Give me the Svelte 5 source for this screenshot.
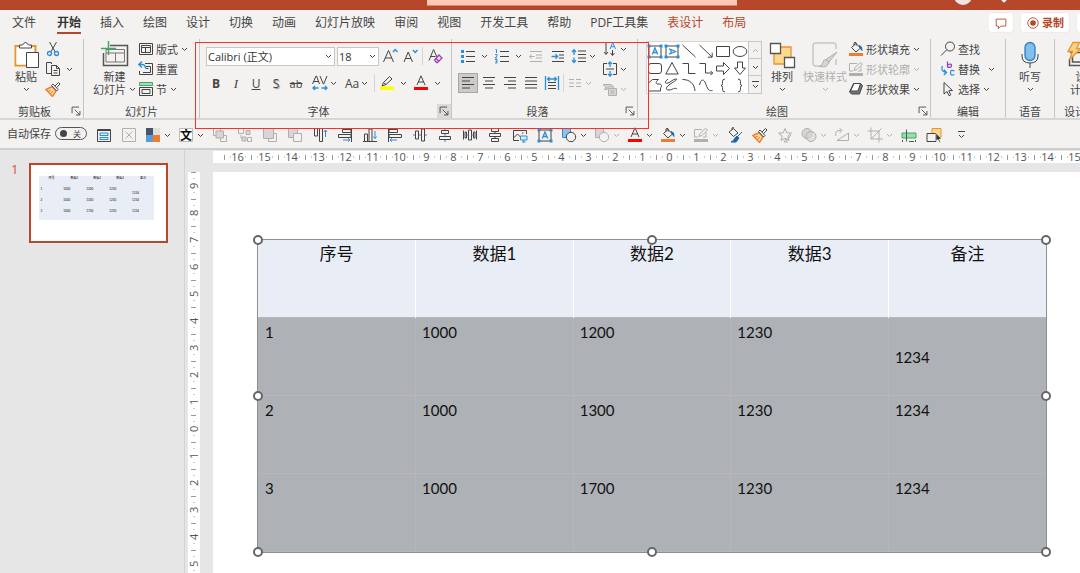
<script lang="ts">
    const tabs = ['文件', '开始', '插入', '绘图', '设计', '切换', '动画', '幻灯片放映', '审阅', '视图', '开发工具', '帮助', 'PDF工具集', '表设计', '布局']
    const activeTab = '开始'
    const contextTabs = ['表设计', '布局']

    const columns = ['序号', '数据1', '数据2', '数据3', '备注']
    const rows = [
        ['1', '1000', '1200', '1230', '1234'],
        ['2', '1000', '1300', '1230', '1234'],
        ['3', '1000', '1700', '1230', '1234']
    ]

    const horizontalMarks = Array.from({ length: 32 }, (_, i) => Math.abs(i - 16))
    const verticalMarks = Array.from({ length: 15 }, (_, i) => Math.abs(i - 9))
    const handles = ['nw', 'n', 'ne', 'w', 'e', 'sw', 's', 'se']

    const shapes = [
        'textBox', 'textBoxVertical', 'line', 'arrowLine', 'rect', 'oval',
        'roundRect', 'triangle', 'elbow', 'elbowArrow', 'arrowRight', 'arrowDown',
        'freeform', 'scribble', 'arc', 'curve', 'braceLeft', 'braceRight'
    ]

    type Tool = { icon: string, label: string, menu?: boolean, off?: boolean }

    const quickTools: Tool[] = [
        { icon: 'form', label: '窗体' },
        { icon: 'boxX', label: '删除', off: true },
        { icon: 'palette', label: '主题颜色', menu: true },
        { icon: 'glyph', label: '字体', menu: true },
        { icon: 'group', label: '组合', off: true },
        { icon: 'ungroup', label: '取消组合', off: true },
        { icon: 'front', label: '置于顶层', off: true },
        { icon: 'back', label: '置于底层', off: true },
        { icon: 'alignTop', label: '顶端对齐' },
        { icon: 'alignRightEdge', label: '右对齐' },
        { icon: 'alignBottom', label: '底端对齐' },
        { icon: 'alignLeftEdge', label: '左对齐' },
        { icon: 'alignMiddle', label: '垂直居中' },
        { icon: 'alignCenter', label: '水平居中' },
        { icon: 'spreadH', label: '横向分布' },
        { icon: 'spreadV', label: '纵向分布' },
        { icon: 'picture', label: '图片' },
        { icon: 'textBox', label: '文本框' },
        { icon: 'shapes', label: '形状', menu: true },
        { icon: 'shapesOff', label: '编辑形状', menu: true, off: true },
        { icon: 'fontColor', label: '字体颜色', menu: true },
        { icon: 'bucket', label: '形状填充', menu: true },
        { icon: 'outline', label: '形状轮廓', menu: true, off: true },
        { icon: 'eyedropper', label: '取色器' },
        { icon: 'brush', label: '格式刷' },
        { icon: 'star', label: '动画刷', off: true },
        { icon: 'merge', label: '合并形状', menu: true, off: true },
        { icon: 'rotate', label: '旋转', menu: true, off: true },
        { icon: 'crop', label: '裁剪', menu: true, off: true },
        { icon: 'guide', label: '参考线' },
        { icon: 'selection', label: '选择窗格' }
    ]

    const blue = '#2b8fd6'
    const orange = '#ed7d31'
    const pale = '#d6d6d6'

    // Small icons share a 16 x 16 box, the large ones a 28 x 28 box
    const icons: Record<string, string> = {
        scissors: `<path d="M4.500 1 10.200 11M11.500 1 5.800 11"/><g stroke="${blue}" stroke-width="1.300"><circle cx="4.500" cy="12.500" r="2"/><circle cx="11.500" cy="12.500" r="2"/></g>`,
        copy: `<path d="M6 12.500H1.500v-11h5V3M6.500 4.500h5l3 3v7h-8zM11.500 4.500v3h3M8.500 9.500h4M8.500 12h4" />`,
        brush: `<path d="M1 8.500 7 5.500 11 10 7.500 15.500z" fill="#ffd9a0" stroke="${orange}" stroke-width="1.400"/><path d="M3 10.500 6 9M5 13 8 10" stroke="${orange}"/><path d="M6.500 4.500 8 3l5 5.500-1.500 1.500zM10 5 13.500 1.500l1.500 1.500-3.500 3.700" fill="#fff"/>`,
        layout: `<path d="M1.500 2.500h13v11h-13z"/><path d="M3.500 4.500h9v2h-9zM3.500 6.500v5h9v-5M7.500 6.500v5"/>`,
        reset: `<path d="M7 2.500h7.500v11h-13V10M5 11.500h7.500v-6H8M8 7.500h2.500"/><path d="M4 .5.800 3.500 4 6.500M1 3.500h3.500q3 .5 3 4" stroke="${blue}" stroke-width="1.300"/>`,
        section: `<path d="M1.500 4.500v-3h13v3z" stroke="#43a566" fill="#a7dcb6"/><path d="M1.500 6.500h13v8h-13zM4 8.500h8v4H4z"/>`,
        grow: `<path d="M1.500 14 6.500 2.500 11.500 14M3.200 10h6.600"/><path d="M11 4 13.200 1.500 15.500 4" stroke="${blue}" stroke-width="1.400"/>`,
        shrink: `<path d="M2 14 6.200 4 10.500 14M3.500 10.500h5.400"/><path d="M11 2 13.200 4.500 15.500 2" stroke="${blue}" stroke-width="1.400"/>`,
        clear: `<path d="M2 12.500 6.500 1.500 10 9M3.500 8.500h5"/><path d="m7.500 12 4.500-5 3 3-4.500 4.500h-1zM9 10.500l3 2.700" stroke="#9b45b2" fill="#f3ddf7" stroke-width="1.300"/>`,
        spacing: `<path d="M.5 9 4 1h.5L7.500 9M1.800 6.500h4.400M8 1l3.300 8h.4L15 1"/><path d="M1 13h5.500M3 11 1 13l2 2M9.500 13H15M13 11l2 2-2 2" stroke="${blue}" stroke-width="1.300"/>`,
        highlight: `<path d="m4.500 7.500 6-6 2.500 2.500-6 5.500zM4.500 7.500 3 11l4-1.500"/><path d="M1 11.500h14v3.500H1z" fill="#ffff00" stroke="none"/>`,
        fontColor: `<path d="M4 10 8 .800 12 10M5.300 7h5.400"/><path d="M1 12h14v3H1z" fill="#f00" stroke="none"/>`,
        bullets: `<path d="M6 3.500h9M6 8.500h9M6 13.500h9"/><path d="M1 2h3v3H1zM1 7h3v3H1zM1 12h3v3H1z" fill="${blue}" stroke="none"/>`,
        numbers: `<path d="M6 3.500h9M6 8.500h9M6 13.500h9"/><path d="M1.500 1.500h1v3.500M1 6.500h2v1.500l-2 2h2.300M1 11.500h2v3.500H1M1.500 13.200H3" stroke="${blue}"/>`,
        outdent: `<path d="M2 3.500h12M8 7h6M8 10h6M2 13.500h12M1.500 8.500h5M3.500 6.500l-2 2 2 2"/>`,
        indent: `<path d="M2 3.500h12M9 7h5M9 10h5M2 13.500h12"/><path d="M1.500 8.500h6M5.500 6.200 7.700 8.500 5.500 10.800" stroke="${blue}" stroke-width="1.300"/>`,
        lineSpacing: `<path d="M7 3h8M7 6.500h8M7 10h8M7 13.500h8"/><path d="M3 2v5M3 9.500v5M1 4l2-2.200L5 4M1 12.300l2 2.200 2-2.200" stroke="${blue}" stroke-width="1.300"/>`,
        left: `<path d="M2 2.500h12M2 6h8M2 9.500h12M2 13h8"/>`,
        center: `<path d="M2 2.500h12M4 6h8M2 9.500h12M4 13h8"/>`,
        right: `<path d="M2 2.500h12M6 6h8M2 9.500h12M6 13h8"/>`,
        justify: `<path d="M2 2.500h12M2 6h12M2 9.500h12M2 13h12"/>`,
        distribute: `<path d="M4 7.500h8M4 10.500h8M4 13.500h8"/><path d="M1.500 1v14M14.500 1v14M3.500 4h9M5.500 2l-2 2 2 2M10.500 2l2 2-2 2" stroke="${blue}" stroke-width="1.300"/>`,
        columns: `<path d="M2 4.500h5M2 8h5M2 11.500h5M9 4.500h5M9 8h5M9 11.500h5"/>`,
        textDirection: `<path d="M4 1v12M2 11l2 2.500L6 11M10.500 9v5M8.500 12l2 2.500 2-2.500"/><path d="M8 8 10.700 1.500 13.500 8M9 5.700h3.500" stroke="${blue}"/>`,
        alignText: `<path d="M5 2.500H1.500v11H5M11 2.500h3.500v11H11M4 8h8"/><path d="M8 1v5M8 10v5M6 3l2-2 2 2M6 13l2 2 2-2" stroke="${blue}" stroke-width="1.300"/>`,
        smartArt: `<path d="M1 3.500h8l3 2.500h-6L5 8.500H2.500L4 6zM6.500 7.500h8v7h-8zM8.500 10h4M8.500 12h4" fill="${pale}"/>`,
        textBox: `<path d="M2 3h12v11H2z"/><path d="M5.300 11.500 8 5l2.700 6.500M6.200 9.500h3.600" stroke="${blue}" stroke-width="1.300"/><path d="M.5 1.500h3v3h-3zM12.500 1.500h3v3h-3zM.5 12.500h3v3h-3zM12.500 12.500h3v3h-3z" fill="${blue}" stroke="none"/>`,
        textBoxVertical: `<path d="M2 3h12v11H2z"/><path d="M5 5.800 11.500 8.500 5 11.200M7 6.700v3.600" stroke="${blue}" stroke-width="1.300"/><path d="M.5 1.500h3v3h-3zM12.500 1.500h3v3h-3zM.5 12.500h3v3h-3zM12.500 12.500h3v3h-3z" fill="${blue}" stroke="none"/>`,
        line: `<path d="m1.500 2 13 12"/>`,
        arrowLine: `<path d="m1.500 2 12.500 12M14.200 9.800v4.400H9.800"/>`,
        rect: `<path d="M1.500 3.500h13v10h-13z"/>`,
        oval: `<ellipse cx="8" cy="8.500" rx="6.800" ry="5"/>`,
        roundRect: `<rect x="1.500" y="3.500" width="13" height="10" rx="2.500"/>`,
        triangle: `<path d="M8 2.500 14.200 14H1.800z"/>`,
        elbow: `<path d="M1.500 3.500h6v10h7"/>`,
        elbowArrow: `<path d="M1.500 3.500h6v9.500h7M12.500 10.800l2.200 2.200-2.200 2.200"/>`,
        arrowRight: `<path d="M1.500 6h7V2.500l6 6-6 6V11h-7z"/>`,
        arrowDown: `<path d="M5.500 2v6H2.500l5.500 6.500L13.500 8h-3V2z"/>`,
        freeform: `<path d="M1.500 14V6l4-3.500h6C8 5 8.500 7.500 12 7c3 0 3 2.500 1.500 4v3z"/>`,
        scribble: `<path d="M4 2c-4 3-3 5 0 4s5-4 8-4-3 3-7 6-3 5 0 5 6-3 8-1"/>`,
        arc: `<path d="M1.500 2.500c7 0 12 4 12.500 11.500"/>`,
        curve: `<path d="M1.500 8C3 1.500 6 1.500 8 7.500s3.500 6.500 6.500 6"/>`,
        braceLeft: `<path d="M10 2q-2.500 0-2.500 2.500v2Q7.500 8.500 6 8.500q1.500 0 1.500 2v2Q7.500 15 10 15"/>`,
        braceRight: `<path d="M6 2q2.500 0 2.500 2.500v2q0 2 1.500 2-1.500 0-1.500 2v2Q8.500 15 6 15"/>`,
        bucket: `<path d="m3.500 6.500 4.500-4 4.500 4.500-4.500 4zM6 4.500V2q1-1.500 2.300 0v2.500"/><path d="M11 4.500q3.500.5 3 5l-1.500-2z" fill="#1769ad" stroke="#1769ad"/><path d="M1 12h14v3H1z" fill="${orange}" stroke="none"/>`,
        outline: `<path d="M9 2.500H1.500V10H5M13 5.500V10h-3M6 9.500l1-3 5.500-5 2 1.500-5.500 5.500z"/><path d="M1 12h14v3H1z" fill="currentColor" stroke="none"/>`,
        effects: `<path d="M5.500 2.500h7l2 2-3 8.500h-8l-2-2z" fill="#777"/><path d="M6 2.500h6.500L10 10H2.500z" fill="#fff"/>`,
        search: `<circle cx="10" cy="5.500" r="4.500"/><path d="M6.500 9 1 14.500"/>`,
        replace: `<path d="M7.500.5v6M7.500 4q4-2 4 .5t-4 1.500" stroke="#9b45b2" stroke-width="1.300"/><path d="M14.500 10q-4-2-4 1.700t4 1.800M2.500 5q-2.500 5 3.500 6.500M4 8.800 6.500 11.500 3.800 14" stroke="${blue}" stroke-width="1.300"/>`,
        pointer: `<path d="M4 1.500v11.500l3-2.500 2 4.200 1.800-.8-2-4.200 3.700-.2z"/>`,
        form: `<path d="M1.500 2.500h13v12h-13z"/><path d="M1 3.500h14" /><path d="M4 6h8v2.500H4zM4 10.500h8v2H4z" stroke="${blue}" fill="#d8ecfa"/>`,
        boxX: `<path d="M1.500 1.500h13v13h-13zM4.500 4.500l7 7M11.500 4.500l-7 7"/>`,
        palette: `<g stroke="none"><path d="M1 1h7v7H1z" fill="#44546a"/><path d="M8 1h7v7H8z" fill="#e0e0e0"/><path d="M1 8h7v7H1z" fill="#5b9bd5"/><path d="M8 8h7v7H8z" fill="${orange}"/></g>`,
        glyph: `<path d="M1.500 1.500h13v13h-13z" fill="#fff" stroke="#bbb"/><text x="8" y="13" font-size="12" font-weight="700" text-anchor="middle" fill="#111" stroke="none">文</text>`,
        group: `<path d="M1.500 1.500h7v7h-7zM10.500 8.500h4v6h-6v-4"/><path d="M4 4h7.500v7H4z" fill="${pale}"/>`,
        ungroup: `<path d="M1.500 1.500h5v5h-5zM10.500 10.500h4v4h-4zM4 8v3h3"/><path d="M9 3.500h4v4H9zM5 10h4v4H5z" fill="${pale}"/>`,
        front: `<path d="M12 6.500h2.500v8h-8V12"/><path d="M1.500 1.500h10v10h-10z" fill="${pale}"/>`,
        back: `<path d="M1.500 1.500h9v9h-9z" fill="${pale}"/><path d="M6.500 6.500h8v8h-8z" fill="#f3f2f1"/>`,
        alignTop: `<path d="M1 1.500h10M2.500 2v7h3V2M7.500 2v12.500h3V2" /><path d="M13.500 10V3M11.800 5l1.700-2 1.700 2" stroke="${blue}"/>`,
        alignRightEdge: `<path d="M14.500 1v14M5.500 2.500H14v3H5.500zM1.500 7.500H14v3H1.500z"/><path d="M6 13h7M11 11.300l2 1.700-2 1.700" stroke="${blue}"/>`,
        alignBottom: `<path d="M1 14.500h14M2.500 14V7h3v7M7 14V2h3v12"/><path d="M13 4v7.500M11.300 9.500l1.700 2 1.700-2" stroke="${blue}"/>`,
        alignLeftEdge: `<path d="M1.500 1v14M2 2.500h8.500v3H2zM2 7.500h12.500v3H2z"/><path d="M10 13H3M5 11.300 3 13l2 1.700" stroke="${blue}"/>`,
        alignMiddle: `<path d="M1 8h14" stroke="${blue}"/><path d="M3.500 4h3v8h-3zM9.500 2h3v12h-3z" fill="#f3f2f1"/>`,
        alignCenter: `<path d="M8 1v14" stroke="${blue}"/><path d="M4.500 3.500h7v3h-7zM2.500 9.500h11v3h-11z" fill="#f3f2f1"/>`,
        spreadH: `<path d="M1.500 3.500v9M14.500 3.500v9M6.500 3h3v10h-3zM3 5h1.500v6H3zM11.500 5H13v6h-1.500z"/><path d="M4.500 8h2M9.500 8h2" stroke="${blue}"/>`,
        spreadV: `<path d="M4.500 1.500h7v3h-7zM2.500 6.500h11v3h-11zM4.500 11.500h7v3h-7zM8 4.500v2M8 9.500v2"/>`,
        picture: `<path d="M14.500 7V3.500h-13v10H7M1.500 11l4-4 3 3M10 6h1.500"/><path d="M8.500 9h6.500v4H8.500zM11.700 13v2M10 15h3.500" stroke="${blue}" fill="#d8ecfa"/>`,
        shapes: `<path d="M1.500 1.500h8v9h-8z" fill="#8cc3ee" stroke="${blue}"/><circle cx="10" cy="10" r="4.700" fill="#f3f2f1"/>`,
        shapesOff: `<path d="M1.500 1.500h8v9h-8z" fill="${pale}"/><circle cx="10" cy="10" r="4.700" fill="#f3f2f1"/>`,
        eyedropper: `<path d="m2 5 4.500-3.500L11 6 6.500 9.500zM5 3V1q1-1 2 0"/><path d="m15 5-6 6M10 9l2 2-3 4H4q3-1 3.500-3.500z" fill="#1769ad" stroke="#1769ad"/>`,
        star: `<path d="m8 1.500 1.800 4.300 4.700.3-3.600 3 1 4.400L8 11.200 4 13.500l1.200-4.400-3.700-3 4.700-.3zM14 8l-5 6M9 12l-2 3h4"/>`,
        merge: `<circle cx="6" cy="6.500" r="5" fill="${pale}"/><circle cx="10" cy="9.500" r="5" fill="${pale}" fill-opacity=".6"/>`,
        rotate: `<path d="M14.500 6v7.500H3zM2 9Q0 3 7 3.500M5.500 1 8 3.500 5.500 6"/>`,
        crop: `<path d="M4 .5V12h12M.5 4H12v11.500M4 12 14.500 1.500"/>`,
        guide: `<path d="M1 6h14v5H1z" fill="#9bdcab" stroke="#43a566"/><path d="M5.500 2.500v12M1.500 13v2M14.500 13v2M8 14.500h5" stroke="#555"/>`,
        selection: `<path d="M6 1.500h9v9H6z" fill="#ffd78a" stroke="#e7952d"/><path d="M1 6.500h9v8H1z" fill="#f3f2f1"/><path d="M10 6v8l2-1.500 1.500 3 1-.5-1.300-3h2.300z" fill="#333" stroke="#fff" stroke-width=".5"/>`,
        paste: `<path d="M9 5H3.500v19.500H14M19 5h4.500v6" stroke="#e7952d" stroke-width="2"/><path d="M4.500 6.500h17v17h-17z" fill="#fff" stroke="none"/><path d="M7.500 7V4h3q3-5 6 0h3v3z" fill="#fff"/><path d="M14.500 11.500h12v15h-12z" fill="#fff"/>`,
        newSlide: `<path d="M9 4.500h17.500v20h-24V12" fill="none" stroke="#555" stroke-width="1.500"/><path d="M5 12h18.500v9H5zM5 12V8.500h18.500V12M14.500 12v9" stroke="#777"/><path d="M7.500 0v14M0 7.500h15" stroke="#43a566" stroke-width="1.500"/>`,
        arrange: `<path d="M6 6h17v17H6z" fill="#fbd98d" stroke="#e7952d" stroke-width="1.300"/><path d="M2.500 2.500h10v10h-10zM16.500 16.500h10v10h-10z" fill="#fff" stroke="#555" stroke-width="1.300"/>`,
        quickStyle: `<path d="M25 8V4q0-2-2-2H4Q2 2 2 4v19q0 2 2 2h6M25 18v6" fill="none"/><path d="M26 11 18 21l-3-2.500zM15 18.500q-3 0-3.500 4-1 3-3 3 8 2 9.500-4.500z" fill="${pale}"/>`,
        mic: `<rect x="9" y="1.500" width="10" height="18" rx="5" fill="#83beec" stroke="#2b7fc4" stroke-width="1.300"/><path d="M6 13v2q0 7 8 7t8-7v-2M14 22v5"/>`,
        designer: `<path d="M3 11.500h25M2.500 18v6.500H28M5.500 12v9H28" fill="none" stroke="#555" stroke-width="1.500"/><path d="M6 1.500h6.500l-3 6h4.500L2.500 18.500l3-8H1z" fill="#fdd084" stroke="#e7952d" stroke-width="1.300"/>`,
        comment: `<path d="M2.500 3.500h11v8H8l-3 3v-3H2.500z" stroke="#b7472a"/>`,
        record: `<circle cx="8" cy="8" r="6" stroke="#b7472a"/><circle cx="8" cy="8" r="3.200" fill="#b7472a" stroke="none"/>`,
        launcher: `<path d="M3.500 10.500v-7h8M6.500 6.500l6 6M12.500 8v4.500H8"/>`
    }
</script>

{#snippet icon(name: string)}
    <svg class="icon" viewBox="0 0 16 16" aria-hidden="true">{@html icons[name]}</svg>
{/snippet}

{#snippet bigIcon(name: string)}
    <svg class="big-icon" viewBox="0 0 28 28" aria-hidden="true">{@html icons[name]}</svg>
{/snippet}

{#snippet chevron()}
    <svg class="chevron" viewBox="0 0 7 5" aria-hidden="true"><path d="M1 1l2.500 2.500L6 1" /></svg>
{/snippet}

{#snippet tool(name: string, label: string, menu = false, off = false)}
    <button class="tool" class:off aria-label={label}>
        {@render icon(name)}
        {#if menu}{@render chevron()}{/if}
    </button>
{/snippet}

{#snippet textTool(name: string, label: string, menu = false, off = false)}
    <button class="tool" class:off>
        {@render icon(name)}
        <span>{label}</span>
        {#if menu}{@render chevron()}{/if}
    </button>
{/snippet}

{#snippet footer(title: string, launcher = false, hot = false)}
    <footer>
        <span>{title}</span>
        {#if launcher}
            <button class="launcher" class:hot aria-label={title + '设置'}>{@render icon('launcher')}</button>
        {/if}
    </footer>
{/snippet}

{#snippet dataTable()}
    <table>
        <thead>
            <tr>
                {#each columns as column}<th>{column}</th>{/each}
            </tr>
        </thead>
        <tbody>
            {#each rows as row, i}
                <tr>
                    {#each row as cell, j}
                        <td class:lowered={i === 0 && j === 4}>{cell}</td>
                    {/each}
                </tr>
            {/each}
        </tbody>
    </table>
{/snippet}

<div class="app">
    <header class="title-bar">
        <div class="search"></div>
        <div class="account"><i class="avatar"></i><i class="gem"></i></div>
    </header>

    <div class="tab-row">
        <nav>
            {#each tabs as tab}
                <button class="tab" class:active={tab === activeTab} class:context={contextTabs.includes(tab)}>{tab}</button>
            {/each}
        </nav>
        <div class="actions">
            <button class="action" aria-label="批注">{@render icon('comment')}</button>
            <button class="action record">{@render icon('record')}<span>录制</span></button>
            <button class="action" aria-label="共享"></button>
        </div>
    </div>

    <div class="ribbon">
        <section class="group clipboard">
            <div class="body">
                <button class="big">{@render bigIcon('paste')}<span>粘贴</span>{@render chevron()}</button>
                <div class="stack">
                    {@render tool('scissors', '剪切')}
                    {@render tool('copy', '复制', true)}
                    {@render tool('brush', '格式刷')}
                </div>
            </div>
            {@render footer('剪贴板', true)}
        </section>

        <section class="group slides">
            <div class="body">
                <button class="big">
                    {@render bigIcon('newSlide')}
                    <span>新建</span>
                    <span class="with-chevron">幻灯片{@render chevron()}</span>
                </button>
                <div class="stack">
                    {@render textTool('layout', '版式', true)}
                    {@render textTool('reset', '重置')}
                    {@render textTool('section', '节', true)}
                </div>
            </div>
            {@render footer('幻灯片')}
        </section>

        <div class="marked">
            <section class="group font">
                <div class="body rows">
                    <div class="row">
                        <label class="combo family">
                            <select aria-label="字体"><option>Calibri (正文)</option></select>
                            {@render chevron()}
                        </label>
                        <label class="combo size">
                            <select aria-label="字号"><option>18</option></select>
                            {@render chevron()}
                        </label>
                        <div class="sizers">
                            {@render tool('grow', '增大字号')}
                            {@render tool('shrink', '减小字号')}
                            <i class="divider"></i>
                            {@render tool('clear', '清除格式')}
                        </div>
                    </div>
                    <div class="row">
                        <button class="letter"><b>B</b></button>
                        <button class="letter italic"><i>I</i></button>
                        <button class="letter"><u>U</u></button>
                        <button class="letter shadow">S</button>
                        <button class="letter"><s>ab</s></button>
                        <div class="row split">
                            {@render tool('spacing', '字符间距', true)}
                            <button class="tool case"><span>Aa</span>{@render chevron()}</button>
                        </div>
                        <i class="divider"></i>
                        <div class="row wide">
                            {@render tool('highlight', '突出显示', true)}
                            {@render tool('fontColor', '字体颜色', true)}
                        </div>
                    </div>
                </div>
                {@render footer('字体', true, true)}
            </section>

            <section class="group paragraph">
                <div class="body">
                    <div class="rows">
                        <div class="row lists">
                            <div class="row wide">
                                {@render tool('bullets', '项目符号', true)}
                                {@render tool('numbers', '编号', true)}
                                {@render tool('outdent', '减少缩进', false, true)}
                                {@render tool('indent', '增加缩进')}
                            </div>
                            {@render tool('lineSpacing', '行距', true)}
                        </div>
                        <div class="row aligns">
                            <button class="align on" aria-label="左对齐">{@render icon('left')}</button>
                            <button class="align" aria-label="居中">{@render icon('center')}</button>
                            <button class="align" aria-label="右对齐">{@render icon('right')}</button>
                            <button class="align" aria-label="两端对齐">{@render icon('justify')}</button>
                            <button class="align" aria-label="分散对齐">{@render icon('distribute')}</button>
                            <i class="divider"></i>
                            {@render tool('columns', '分栏', true, true)}
                        </div>
                    </div>
                    <div class="stack">
                        {@render tool('textDirection', '文字方向', true)}
                        {@render tool('alignText', '对齐文本', true)}
                        {@render tool('smartArt', '转换为 SmartArt', true, true)}
                    </div>
                </div>
                {@render footer('段落', true)}
            </section>
        </div>

        <section class="group drawing">
            <div class="body">
                <div class="gallery">
                    <div class="shapes">
                        {#each shapes as shape}
                            <button aria-label={shape}>{@render icon(shape)}</button>
                        {/each}
                    </div>
                    <div class="scroller">
                        <button class="up off" aria-label="上一行">{@render chevron()}</button>
                        <button aria-label="下一行">{@render chevron()}</button>
                        <button class="more" aria-label="其他">{@render chevron()}</button>
                    </div>
                </div>
                <button class="big">{@render bigIcon('arrange')}<span>排列</span>{@render chevron()}</button>
                <button class="big off">{@render bigIcon('quickStyle')}<span>快速样式</span>{@render chevron()}</button>
                <div class="stack">
                    {@render textTool('bucket', '形状填充', true)}
                    {@render textTool('outline', '形状轮廓', true, true)}
                    {@render textTool('effects', '形状效果', true)}
                </div>
            </div>
            {@render footer('绘图', true)}
        </section>

        <section class="group editing">
            <div class="body">
                <div class="stack">
                    {@render textTool('search', '查找')}
                    {@render textTool('replace', '替换', true)}
                    {@render textTool('pointer', '选择', true)}
                </div>
            </div>
            {@render footer('编辑')}
        </section>

        <section class="group voice">
            <div class="body">
                <button class="big">{@render bigIcon('mic')}<span>听写</span>{@render chevron()}</button>
            </div>
            {@render footer('语音')}
        </section>

        <section class="group designer">
            <div class="body">
                <button class="big">{@render bigIcon('designer')}<span>设</span><span>计器</span></button>
            </div>
            {@render footer('设计器')}
        </section>
    </div>

    <div class="quick">
        <label class="autosave">
            自动保存
            <input type="checkbox" role="switch">
            <span class="switch"><span>关</span></span>
        </label>
        {#each quickTools as item}
            {@render tool(item.icon, item.label, item.menu, item.off)}
        {/each}
        <button class="overflow more" aria-label="自定义快速访问工具栏">{@render chevron()}</button>
    </div>

    <main>
        <aside>
            <span class="number">1</span>
            <div class="thumbnail">{@render dataTable()}</div>
        </aside>
        <div class="ruler horizontal">
            {#each horizontalMarks as mark}<span>{mark}</span>{/each}
        </div>
        <div class="ruler vertical">
            {#each verticalMarks as mark}<span>{mark}</span>{/each}
        </div>
        <div class="slide">
            <div class="selected">
                {@render dataTable()}
                {#each handles as handle}<i class="handle {handle}"></i>{/each}
            </div>
        </div>
    </main>
</div>

<style>
    :global(body) {
        overflow: hidden;
    }

    .app {
        --text: #444;
        --line: #c8c6c4;
        --bar: #f3f2f1;
        --brand: #b7472a;

        display: flex;
        flex-direction: column;
        height: 100vh;
        overflow: hidden;

        color: var(--text);
        background: var(--bar);
        font: 11px/13px 'Open Sans', 'Noto Sans CJK SC', sans-serif;
    }

    button {
        padding: 0;
        border: 0;

        color: inherit;
        background: none;
        font: inherit;
        white-space: nowrap;
    }

    svg {
        display: block;
        flex: none;

        fill: none;
        stroke: currentColor;
    }

    .icon {
        width: 16px;
        height: 16px;
    }

    .big-icon {
        width: 28px;
        height: 28px;
    }

    .chevron {
        width: 7px;
        height: 5px;
    }

    .off {
        color: #b1afad;
    }

    /* Title bar and tabs */
    .title-bar {
        display: grid;
        grid-template-columns: minmax(0, 1fr) 310px minmax(0, 1fr);
        flex: none;
        height: 10px;

        background: var(--brand);
    }

    .search {
        grid-column: 2;
        height: 5px;
        margin: 0 -42px 0 42px;

        background: #fdc9b4;
        border-bottom: 1px solid #d98a70;
    }

    .account {
        display: flex;
        justify-content: flex-end;
        gap: 30px;
        padding-right: 74px;
        overflow: hidden;
    }

    .avatar {
        width: 18px;
        height: 18px;
        margin-top: -13px;

        background: #f1e6e6;
        border-radius: 50%;
    }

    .gem {
        width: 4px;
        height: 4px;
        margin-top: -2px;

        background: #fff;
        transform: rotate(45deg);
    }

    .tab-row {
        display: flex;
        justify-content: space-between;
        flex: none;
        height: 29px;
    }

    nav {
        display: flex;
        align-items: flex-start;
        gap: 19px;
        padding: 4px 0 0 12px;
    }

    .tab {
        border-bottom: 2px solid transparent;
        font-size: 12px;
        line-height: 18px;
    }

    .tab:first-child {
        margin-right: 2px;
    }

    .tab.active {
        color: #333;
        border-color: var(--brand);
        font-weight: 700;
    }

    .tab.context {
        color: var(--brand);
    }

    .actions {
        display: flex;
        gap: 8px;
        width: 91px;
        padding-top: 3px;
        overflow: hidden;
    }

    .action {
        display: flex;
        align-items: center;
        justify-content: center;
        gap: 2px;
        flex: 0 0 24px;
        height: 19px;

        background: #fff;
        border-radius: 2px;
        box-shadow: 0 0 1px #bbb;
    }

    .action.record {
        flex-basis: 48px;
        color: var(--brand);
        font-weight: 700;
    }

    .action .icon {
        width: 14px;
        height: 14px;
    }

    /* Ribbon */
    .ribbon {
        display: flex;
        flex: none;
        border-bottom: 2px solid #d8d6d4;
    }

    .group {
        display: flex;
        flex-direction: column;
        flex: none;
        height: 79px;

        border-right: 1px solid var(--line);
        box-sizing: border-box;
    }

    .body {
        display: flex;
        align-items: flex-start;
        flex: 1;
    }

    footer {
        display: flex;
        align-items: center;
        height: 14px;
    }

    footer > span {
        flex: 1;
        text-align: center;
        white-space: nowrap;
    }

    .launcher {
        width: 14px;
        height: 14px;
    }

    .launcher .icon {
        width: 14px;
        height: 14px;
    }

    .launcher.hot {
        background: #dcdad8;
    }

    .big {
        display: flex;
        flex-direction: column;
        align-items: center;
        padding-top: 2px;
    }

    .big .big-icon {
        margin-bottom: 1px;
    }

    .big > .chevron {
        margin-top: 4px;
    }

    .with-chevron {
        display: flex;
        align-items: center;
        gap: 3px;
    }

    .stack {
        display: flex;
        flex-direction: column;
    }

    .tool {
        display: flex;
        align-items: center;
        gap: 2px;
        height: 20px;
    }

    .stack .tool .chevron {
        margin-left: 1px;
    }

    .clipboard {
        width: 84px;
    }

    .clipboard .big {
        margin: 0 5px 0 12px;
    }

    .clipboard .stack .chevron {
        margin-left: 3px;
    }

    .slides {
        width: 116px;
    }

    .slides .big {
        margin: 0 2px 0 9px;
    }

    /* Red frame around the font and paragraph groups */
    .marked {
        position: relative;
        display: flex;
        flex: none;
    }

    .marked::after {
        content: '';
        position: absolute;
        inset: 3px -11px -11px -5px;
        z-index: 1;

        border: 1px solid #f8322a;
        pointer-events: none;
    }

    .rows {
        display: flex;
        flex-direction: column;
        gap: 7px;
        padding-top: 7px;
    }

    .row {
        display: flex;
        align-items: center;
        height: 20px;
    }

    .font {
        width: 252px;
    }

    .font .body {
        padding-left: 6px;
    }

    .combo {
        display: grid;
        align-items: center;
        margin-right: 2px;

        background: #fff;
        border: 1px solid var(--line);
    }

    .combo > :global(*) {
        grid-area: 1 / 1;
    }

    .combo .chevron {
        justify-self: end;
        margin-right: 2px;
        pointer-events: none;
    }

    .family {
        width: 127px;
    }

    .size {
        width: 40px;
    }

    select {
        appearance: none;
        width: 100%;
        height: 17px;
        padding: 0 0 0 1px;
        border: 0;

        color: #333;
        background: none;
        font: inherit;
    }

    .sizers {
        display: flex;
        align-items: center;
        gap: 4px;
        padding-left: 1px;
    }

    .divider {
        width: 1px;
        height: 18px;
        background: #d8d6d4;
    }

    .letter {
        width: 20px;
        font-size: 12px;
    }

    .italic {
        font-family: 'Liberation Serif', serif;
        font-size: 13px;
    }

    .letter.shadow {
        text-shadow: 1px 1px 1px #999;
    }

    .letter s {
        font-size: 11px;
    }

    .split {
        gap: 8px;
        margin: 0 6px;
    }

    .case {
        font-size: 12px;
    }

    .wide {
        gap: 6px;
    }

    .wide .tool {
        gap: 5px;
    }

    .divider + .wide {
        margin-left: 4px;
    }

    .paragraph {
        width: 186px;
    }

    .paragraph .body {
        padding-left: 6px;
    }

    .paragraph .stack {
        margin-left: 6px;
    }

    .paragraph .stack .chevron {
        margin-left: 0;
    }

    .lists {
        gap: 5px;
        padding-left: 2px;
    }

    .aligns {
        gap: 1px;
    }

    .align {
        display: grid;
        place-items: center;
        width: 20px;
        height: 20px;
    }

    .align.on {
        background: #cdcbc9;
        box-shadow: inset 0 0 0 1px #a8a6a4;
    }

    .aligns .tool {
        margin-left: 2px;
    }

    .drawing {
        width: 293px;
    }

    .gallery {
        display: flex;
        margin: 2px 6px 0 8px;

        background: #fff;
        border: 1px solid #d8d6d4;
    }

    .shapes {
        display: grid;
        grid-template-columns: repeat(6, 17px);
    }

    .shapes button {
        height: 17px;
    }

    .scroller {
        display: flex;
        flex-direction: column;
    }

    .scroller button {
        display: grid;
        place-items: center;
        flex: 1;
        width: 12px;

        background: var(--bar);
        box-shadow: 0 0 0 1px var(--line);
    }

    .up .chevron {
        transform: rotate(180deg);
    }

    .more .chevron {
        padding-top: 2px;
        border-top: 1px solid currentColor;
    }

    .drawing .big + .big {
        margin: 0 1px 0 7px;
    }

    .editing {
        width: 75px;
    }

    .editing .body {
        padding-left: 9px;
    }

    .editing .stack .tool:nth-child(2) .chevron {
        margin-left: 6px;
    }

    .voice {
        width: 49px;
    }

    .voice .big {
        margin: 0 auto;
    }

    .designer {
        flex: 1 0 52px;
    }

    .designer .body {
        padding-left: 12px;
    }

    /* Quick access toolbar */
    .quick {
        display: flex;
        align-items: center;
        flex: none;
        height: 30px;
        padding-top: 2px;
        box-sizing: border-box;

        border-bottom: 2px solid #d0cecc;
    }

    .quick .tool {
        padding: 0 4px 0 5px;
    }

    .quick .tool:has(.chevron) {
        gap: 3px;
        padding: 0 3px 0 4px;
    }

    .autosave {
        display: flex;
        align-items: center;
        gap: 4px;
        padding: 0 4px 3px 7px;
        white-space: nowrap;
    }

    .autosave input {
        position: absolute;
        opacity: 0;
    }

    .switch {
        display: flex;
        align-items: center;
        justify-content: space-between;
        width: 21px;
        height: 11px;
        padding: 0 5px 0 4px;

        border: 1px solid #555;
        border-radius: 7px;
        font-size: 8px;
    }

    .switch::before {
        content: '';
        width: 7px;
        height: 7px;
        background: #444;
        border-radius: 50%;
    }

    .overflow {
        margin-left: 12px;
    }

    /* Workspace */
    main {
        display: grid;
        grid-template: 22px minmax(0, 1fr) / 185px 28px minmax(0, 1fr);
        flex: 1;
        min-height: 0;

        background: #e6e6e6;
    }

    aside {
        display: flex;
        align-items: flex-start;
        grid-row: 1 / 3;
        gap: 11px;
        padding: 13px 0 0 11px;

        border-right: 1px solid #d2d2d2;
    }

    .number {
        color: #d8522f;
        font-size: 13px;
    }

    .thumbnail {
        flex: 1;
        height: 65px;
        padding: 11px 12px 0 8px;
        margin-right: 16px;

        background: #fff;
        border: 2px solid var(--brand);
    }

    table {
        width: 100%;
        border-collapse: collapse;
        table-layout: fixed;

        color: #111;
        font-family: Lato, 'Noto Sans CJK SC', sans-serif;
    }

    th,
    td {
        padding: 0;
        font-weight: 400;
        text-align: left;
        vertical-align: top;
    }

    th {
        text-align: center;
    }

    .thumbnail th,
    .thumbnail td {
        height: 11px;
        padding-left: 1px;

        background: #e9edf6;
        font-size: 3px;
        line-height: 4px;
    }

    .thumbnail .lowered {
        padding-top: 4px;
        height: 7px;
    }

    .ruler {
        display: flex;
        overflow: hidden;

        color: #555;
        background: #fff;
    }

    .ruler span {
        flex: 0 0 27px;
        text-align: center;
        background-repeat: no-repeat;
    }

    .horizontal {
        grid-column: 3;
        height: 12px;
        padding-left: 11px;
        margin-top: 1px;
        line-height: 12px;
    }

    .horizontal span {
        background-image:
            linear-gradient(#999, #999),
            linear-gradient(#ccc, #ccc),
            linear-gradient(#ccc, #ccc);
        background-size: 1px 5px, 1px 2px, 1px 2px;
        background-position: 0 4px, 6px 5px, 21px 5px;
    }

    .vertical {
        flex-direction: column;
        grid-area: 2 / 2;
        width: 12px;
        margin-left: 3px;
    }

    .vertical span {
        writing-mode: vertical-rl;
        transform: rotate(180deg);
        line-height: 12px;

        background-image:
            linear-gradient(#999, #999),
            linear-gradient(#ccc, #ccc),
            linear-gradient(#ccc, #ccc);
        background-size: 5px 1px, 2px 1px, 2px 1px;
        background-position: 4px 26px, 5px 6px, 5px 20px;
    }

    .slide {
        grid-area: 2 / 3;
        padding: 68px 34px 0 45px;

        background: #fff;
    }

    .selected {
        position: relative;
        outline: 1px solid #8f8f8f;
    }

    .selected th,
    .selected td {
        height: 73px;
        padding: 4px 6px 0;
        font-size: 15px;
        line-height: 20px;
    }

    .selected th {
        background: #e9edf6;
        border-right: 1px solid #fff;
        font-size: 17px;
    }

    .selected td {
        background: #aeb1b5;
        border: 1px solid #b5b7b9;
    }

    .selected .lowered {
        height: 48px;
        padding-top: 29px;
    }

    .selected th:last-child,
    .selected td:last-child {
        border-right: 0;
    }

    .selected td:first-child {
        padding-left: 7px;
        border-left: 0;
    }

    .handle {
        position: absolute;
        top: 50%;
        left: 50%;
        width: 6px;
        height: 6px;

        background: #fff;
        border: 2px solid #666;
        border-radius: 50%;
        transform: translate(-50%, -50%);
    }

    .nw, .n, .ne {
        top: 0;
    }

    .sw, .s, .se {
        top: 100%;
    }

    .nw, .w, .sw {
        left: 0;
    }

    .ne, .e, .se {
        left: 100%;
    }
</style>
